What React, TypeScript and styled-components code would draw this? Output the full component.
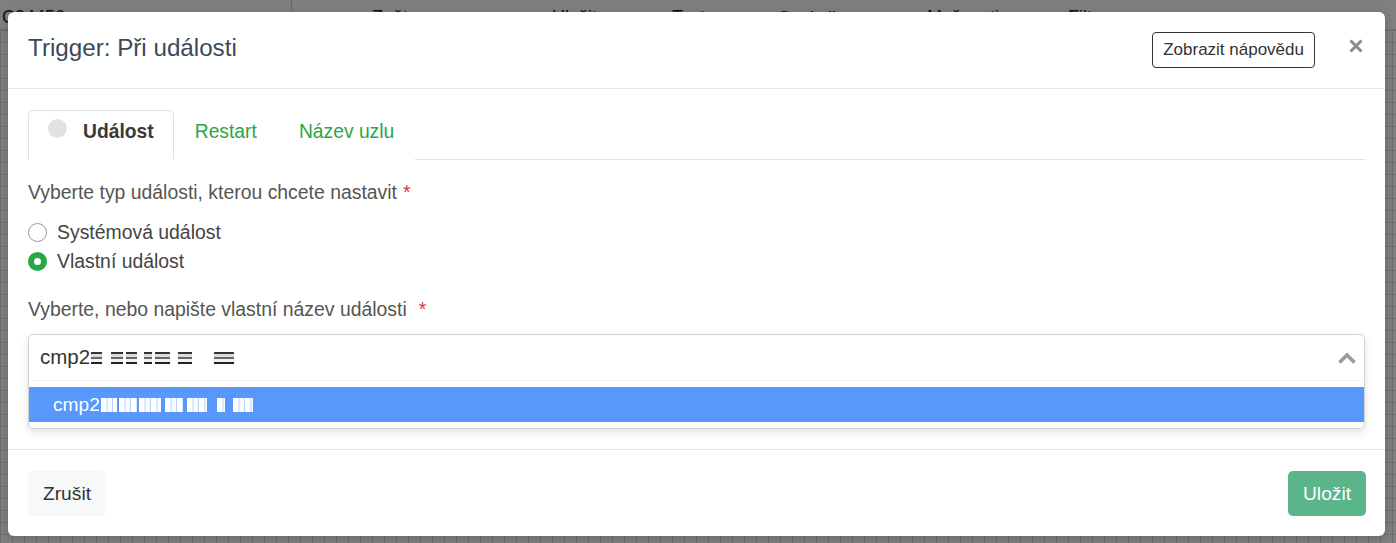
import React from 'react';
import styled, { createGlobalStyle } from 'styled-components';

const Global = createGlobalStyle`
  html, body { margin: 0; padding: 0; }
  body {
    font-family: "Liberation Sans", Arial, Helvetica, sans-serif;
    width: 1396px;
    height: 543px;
    overflow: hidden;
    background: #fff;
  }
  * { box-sizing: border-box; }
`;

const Page = styled.div`
  position: relative;
  width: 1396px;
  height: 543px;
  overflow: hidden;
  background: #fff;
  display: flex;
  flex-direction: column;
`;

const AppBar = styled.div`
  height: 30px;
  flex-shrink: 0;
  display: flex;
  align-items: stretch;
  font-size: 18px;
  color: #222;
  border-bottom: 1px solid #ddd;
`;

const AppBarCell = styled.div<{ $w?: number; $pl?: number; $sep?: boolean }>`
  width: ${(p) => (p.$w ? `${p.$w}px` : 'auto')};
  flex: ${(p) => (p.$w ? '0 0 auto' : '1')};
  padding-left: ${(p) => p.$pl ?? 0}px;
  padding-top: 7px;
  border-right: ${(p) => (p.$sep ? '1px solid #ccc' : 'none')};
  white-space: nowrap;
`;

const Canvas = styled.div`
  flex: 1;
  background-color: #fff;
  background-image:
    repeating-linear-gradient(to right, #dcdcdc 0 1px, transparent 1px 12px),
    repeating-linear-gradient(to bottom, #dcdcdc 0 1px, transparent 1px 12px);
`;

const Overlay = styled.div`
  position: absolute;
  inset: 0;
  background: rgba(0, 0, 0, 0.5);
`;

const Modal = styled.div`
  position: absolute;
  top: 12px;
  left: 8px;
  width: 1377px;
  height: 524px;
  background: #fff;
  border-radius: 6px;
  display: flex;
  flex-direction: column;
  box-shadow: 0 2px 8px rgba(0, 0, 0, 0.2);
`;

const Header = styled.div`
  height: 77px;
  flex-shrink: 0;
  display: flex;
  align-items: center;
  padding: 0 21px 0 20px;
  border-bottom: 1px solid #e6e8ea;
`;

const Title = styled.h5`
  flex: 1;
  margin: 0 0 4px 0;
  font-size: 24.2px;
  line-height: 30px;
  font-weight: 400;
  color: #3b4959;
`;

const HelpButton = styled.button`
  height: 36px;
  padding: 0 10px;
  font-family: inherit;
  font-size: 17px;
  color: #333;
  background: #fff;
  border: 1px solid #333;
  border-radius: 4px;
`;

const CloseButton = styled.button`
  margin-left: 33px;
  margin-bottom: 8px;
  width: 16px;
  height: 16px;
  padding: 0;
  border: none;
  background: transparent;
  display: flex;
  align-items: center;
  justify-content: center;
`;

const Body = styled.div`
  flex: 1;
  padding: 21px 20px 0 20px;
  display: flex;
  flex-direction: column;
`;

const TabNav = styled.div`
  display: flex;
  border-bottom: 1px solid #dee2e6;
  height: 50px;
`;

const Tab = styled.div<{ $active?: boolean }>`
  display: flex;
  align-items: flex-start;
  gap: 16px;
  height: 50px;
  padding: 9px ${(p) => (p.$active ? '19px' : '20px')} 0 ${(p) => (p.$active ? '19px' : '20px')};
  margin-bottom: -1px;
  font-size: 19.3px;
  line-height: 24px;
  font-weight: ${(p) => (p.$active ? 700 : 400)};
  color: ${(p) => (p.$active ? '#3a3a3a' : '#2aa646')};
  background: #fff;
  border: 1px solid ${(p) => (p.$active ? '#dee2e6' : 'transparent')};
  border-bottom-color: ${(p) => (p.$active ? '#fff' : 'transparent')};
  border-radius: 5px 5px 0 0;
`;

const TabDot = styled.span`
  width: 19px;
  height: 19px;
  margin-top: -1px;
  border-radius: 50%;
  background: #e2e2e2;
  flex-shrink: 0;
`;

const FieldLabel = styled.div<{ $mt: number }>`
  margin-top: ${(p) => p.$mt}px;
  font-size: 19.4px;
  line-height: 24px;
  color: #555;
`;

const Required = styled.span<{ $ml?: number }>`
  color: #dc3545;
  margin-left: ${(p) => p.$ml ?? 4}px;
`;

const RadioGroup = styled.div`
  margin-top: 14px;
  display: flex;
  flex-direction: column;
`;

const RadioRow = styled.label`
  height: 29px;
  display: flex;
  align-items: center;
  gap: 10px;
  font-size: 19.4px;
  color: #444;
`;

const RadioCircle = styled.span<{ $checked?: boolean }>`
  width: 19px;
  height: 19px;
  border-radius: 50%;
  flex-shrink: 0;
  box-sizing: border-box;
  border: ${(p) => (p.$checked ? '6px solid #28a745' : '1px solid #999')};
  background: #fff;
`;

const SelectBox = styled.div`
  margin-top: 13px;
  border: 1px solid #d3d3d3;
  border-radius: 5px;
  box-shadow: 0 3px 8px rgba(0, 0, 0, 0.12);
  overflow: hidden;
`;

const SelectInput = styled.div`
  height: 45px;
  display: flex;
  align-items: flex-start;
  padding: 10px 7px 0 11px;
  font-size: 20.5px;
  line-height: 24px;
  color: #333;
`;

const InputValue = styled.div`
  flex: 1;
  display: flex;
  align-items: center;
  height: 24px;
`;

const Chevron = styled.svg`
  margin-top: 6px;
`;

const Dropdown = styled.div`
  padding: 6px 0;
  border-top: 1px solid #f3f3f3;
`;

const Option = styled.div`
  height: 35px;
  display: flex;
  align-items: center;
  padding-left: 24px;
  font-size: 19.2px;
  color: #fff;
  background: #5897fb;
`;

const Redacted = styled.span`
  display: inline-flex;
  align-items: center;
  margin-left: 1px;
`;

const Block = styled.span<{ $tone: 'dark' | 'light' }>`
  display: inline-block;
  height: ${(p) => (p.$tone === 'dark' ? 17 : 14)}px;
  background: ${(p) =>
    p.$tone === 'dark'
      ? 'linear-gradient(to bottom, #fff 0 3px, #333 3px 5px, #ddd 5px 8px, #666 8px 10px, #f2f2f2 10px 13px, #222 13px 15px, #fff 15px)'
      : 'repeating-linear-gradient(to right, #ffffff 0 5px, #dbe8fe 5px 7px, #f7faff 7px 11px, #b8d2fc 11px 12px)'};
`;

const Footer = styled.div`
  height: 87px;
  flex-shrink: 0;
  display: flex;
  align-items: center;
  justify-content: space-between;
  padding: 0 19px 0 20px;
  border-top: 1px solid #e6e8ea;
`;

const FooterButton = styled.button<{ $primary?: boolean }>`
  height: 45px;
  margin-top: 1px;
  padding: 0 15px;
  font-family: inherit;
  font-size: 19.2px;
  border: none;
  border-radius: 5px;
  color: ${(p) => (p.$primary ? '#fff' : '#333')};
  background: ${(p) => (p.$primary ? '#5bb58a' : '#f7f8fa')};
`;

const inputBlocks: { w: number; gap: number }[] = [
  { w: 11, gap: 0 },
  { w: 12, gap: 9 },
  { w: 11, gap: 3 },
  { w: 8, gap: 7 },
  { w: 15, gap: 3 },
  { w: 14, gap: 8 },
  { w: 20, gap: 22 },
];

const optionBlocks: { w: number; gap: number }[] = [
  { w: 16, gap: 0 },
  { w: 18, gap: 2 },
  { w: 22, gap: 2 },
  { w: 18, gap: 4 },
  { w: 20, gap: 4 },
  { w: 8, gap: 10 },
  { w: 20, gap: 8 },
];

const barItems = [
  { text: 'Zpět', w: 180 },
  { text: 'Uložit', w: 120 },
  { text: 'Test', w: 86 },
  { text: '⟲ Statistiky', w: 169 },
  { text: 'Možnosti', w: 141 },
];

export default function App() {
  return (
    <>
      <Global />
      <Page>
        <AppBar>
          <AppBarCell $w={292} $pl={2} $sep>
            C34456
          </AppBarCell>
          <AppBarCell $w={80} />
          {barItems.map((b) => (
            <AppBarCell key={b.text} $w={b.w}>
              {b.text}
            </AppBarCell>
          ))}
          <AppBarCell>Filtr</AppBarCell>
        </AppBar>
        <Canvas />
        <Overlay />
        <Modal>
          <Header>
            <Title>Trigger: Při události</Title>
            <HelpButton>Zobrazit nápovědu</HelpButton>
            <CloseButton aria-label="Zavřít">
              <svg width="14" height="14" viewBox="0 0 14 14">
                <path d="M1.5 1.5 L12.5 12.5 M12.5 1.5 L1.5 12.5" stroke="#8a8a8a" strokeWidth="3" />
              </svg>
            </CloseButton>
          </Header>
          <Body>
            <TabNav>
              <Tab $active>
                <TabDot />
                Událost
              </Tab>
              <Tab>Restart</Tab>
              <Tab>Název uzlu</Tab>
            </TabNav>
            <FieldLabel $mt={20}>
              Vyberte typ události, kterou chcete nastavit
              <Required $ml={6}>*</Required>
            </FieldLabel>
            <RadioGroup>
              <RadioRow>
                <RadioCircle />
                Systémová událost
              </RadioRow>
              <RadioRow>
                <RadioCircle $checked />
                Vlastní událost
              </RadioRow>
            </RadioGroup>
            <FieldLabel $mt={21}>
              Vyberte, nebo napište vlastní název události
              <Required $ml={12}>*</Required>
            </FieldLabel>
            <SelectBox>
              <SelectInput>
                <InputValue>
                  cmp2
                  <Redacted>
                    {inputBlocks.map((b, i) => (
                      <Block key={i} $tone="dark" style={{ width: b.w, marginLeft: b.gap }} />
                    ))}
                  </Redacted>
                </InputValue>
                <Chevron width="20" height="14" viewBox="0 0 20 14">
                  <path d="M2.5 11.5 L10 4 L17.5 11.5" fill="none" stroke="#9a9a9a" strokeWidth="3.6" />
                </Chevron>
              </SelectInput>
              <Dropdown>
                <Option>
                  cmp2
                  <Redacted>
                    {optionBlocks.map((b, i) => (
                      <Block key={i} $tone="light" style={{ width: b.w, marginLeft: b.gap }} />
                    ))}
                  </Redacted>
                </Option>
              </Dropdown>
            </SelectBox>
          </Body>
          <Footer>
            <FooterButton>Zrušit</FooterButton>
            <FooterButton $primary>Uložit</FooterButton>
          </Footer>
        </Modal>
      </Page>
    </>
  );
}
